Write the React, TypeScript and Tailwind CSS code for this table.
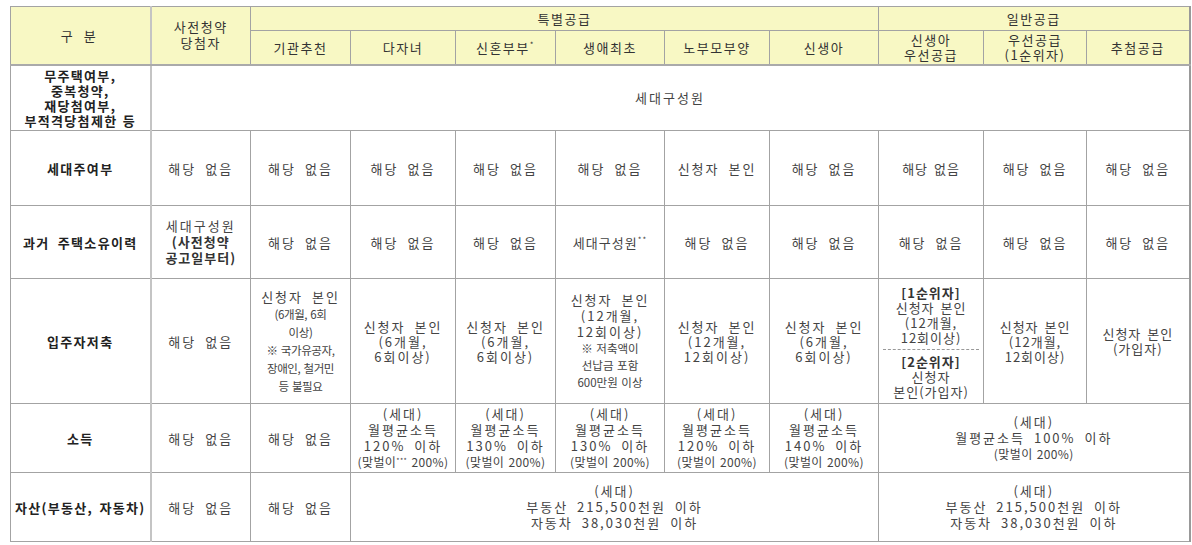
import React from 'react';

const cell = 'border border-[#a3a3a3] text-center align-middle px-1';
const head = `${cell} bg-[#f8f8c4] text-[#333] font-normal tracking-[1.5px] [word-spacing:0px]`;
const label = `${cell} font-bold text-[#222] tracking-[1.3px] border-r-2 border-r-[#c4c4c4]`;
const headBottom = 'border-b-2 border-b-[#aaa]';

const Small = ({ children }: { children: React.ReactNode }) => (
  <span className="text-[12px] tracking-[0.4px] [word-spacing:1px] whitespace-nowrap">{children}</span>
);

const None = () => <td className={cell}>해당 없음</td>;

const Income = ({ pct, star }: { pct: string; star?: boolean }) => (
  <td className={`${cell} leading-[16px] px-0`}>
    (세대)
    <br />
    월평균소득
    <br />
    {pct} 이하
    <br />
    <Small>
      (맞벌이{star && <sup className="text-[7px] -top-[4px]">***</sup>} 200%)
    </Small>
  </td>
);

export default function App() {
  return (
    <div className="bg-white w-[1192px] h-[545px] pt-[6px] pl-[10px]">
      <table
        className="table-fixed border-collapse w-[1179px] text-[13px] leading-[15px] text-[#444] tracking-[2px] [word-spacing:4px] border-t border-t-[#555] border-r-2 border-r-[#999]"
        style={{ fontFamily: '"Noto Sans CJK KR", "Noto Sans", sans-serif' }}
      >
        <colgroup>
          <col className="w-[140px]" />
          <col className="w-[100px]" />
          <col className="w-[100px]" />
          <col className="w-[105px]" />
          <col className="w-[100px]" />
          <col className="w-[109px]" />
          <col className="w-[105px]" />
          <col className="w-[109px]" />
          <col className="w-[105px]" />
          <col className="w-[103px]" />
          <col className="w-[103px]" />
        </colgroup>
        <thead>
          <tr className="h-[24px]">
            <th rowSpan={2} className={`${head} ${headBottom} border-r-2 border-r-[#c4c4c4] tracking-[4px]`}>
              구 분
            </th>
            <th rowSpan={2} className={`${head} ${headBottom} leading-[16px]`}>
              사전청약
              <br />
              당첨자
            </th>
            <th colSpan={6} className={head}>특별공급</th>
            <th colSpan={3} className={head}>일반공급</th>
          </tr>
          <tr className="h-[34px]">
            <th className={`${head} ${headBottom}`}>기관추천</th>
            <th className={`${head} ${headBottom}`}>다자녀</th>
            <th className={`${head} ${headBottom}`}>
              신혼부부<sup className="text-[8px] -top-[5px]">*</sup>
            </th>
            <th className={`${head} ${headBottom}`}>생애최초</th>
            <th className={`${head} ${headBottom}`}>노부모부양</th>
            <th className={`${head} ${headBottom}`}>신생아</th>
            <th className={`${head} ${headBottom}`}>
              신생아
              <br />
              우선공급
            </th>
            <th className={`${head} ${headBottom}`}>
              우선공급
              <br />
              (1순위자)
            </th>
            <th className={`${head} ${headBottom}`}>추첨공급</th>
          </tr>
        </thead>
        <tbody>
          <tr className="h-[66px]">
            <td className={`${label} tracking-[0.6px] [word-spacing:1px]`}>
              무주택여부,
              <br />
              중복청약,
              <br />
              재당첨여부,
              <br />
              부적격당첨제한 등
            </td>
            <td colSpan={10} className={cell}>세대구성원</td>
          </tr>
          <tr className="h-[75px]">
            <td className={label}>세대주여부</td>
            <None />
            <None />
            <None />
            <None />
            <None />
            <td className={cell}>신청자 본인</td>
            <None />
            <td className={`${cell} tracking-[1px] [word-spacing:2px]`}>해당 없음</td>
            <None />
            <None />
          </tr>
          <tr className="h-[73px]">
            <td className={label}>과거 주택소유이력</td>
            <td className={`${cell} leading-[16px]`}>
              세대구성원
              <br />
              <span className="font-bold text-[#333] tracking-[1px]">
                (사전청약
                <br />
                공고일부터)
              </span>
            </td>
            <None />
            <None />
            <None />
            <td className={`${cell} tracking-[1px]`}>
              세대구성원<sup className="text-[8px] -top-[5px]">**</sup>
            </td>
            <None />
            <None />
            <None />
            <None />
            <None />
          </tr>
          <tr className="h-[125px]">
            <td className={label}>입주자저축</td>
            <None />
            <td className={`${cell} leading-[17px]`}>
              신청자 본인
              <br />
              <span className="text-[11.5px] tracking-[-0.4px] [word-spacing:1px]">
                (6개월, 6회
                <br />
                이상)
                <br />※ 국가유공자,
                <br />
                장애인, 철거민
                <br />등 불필요
              </span>
            </td>
            <td className={cell}>
              신청자 본인
              <br />
              (6개월,
              <br />
              6회이상)
            </td>
            <td className={cell}>
              신청자 본인
              <br />
              (6개월,
              <br />
              6회이상)
            </td>
            <td className={`${cell} leading-[16px]`}>
              신청자 본인
              <br />
              (12개월,
              <br />
              12회이상)
              <br />
              <span className="text-[11.5px] tracking-[0px] [word-spacing:1px] leading-[17px]">
                ※ 저축액이
                <br />
                선납금 포함
                <br />
                600만원 이상
              </span>
            </td>
            <td className={cell}>
              신청자 본인
              <br />
              (12개월,
              <br />
              12회이상)
            </td>
            <td className={cell}>
              신청자 본인
              <br />
              (6개월,
              <br />
              6회이상)
            </td>
            <td className={`${cell} p-0 tracking-[1px] [word-spacing:2px]`}>
              <div className="h-[70px] flex flex-col justify-end pb-[4px]">
                <span className="font-bold text-[#333]">[1순위자]</span>
                <span>신청자 본인</span>
                <span>(12개월,</span>
                <span>12회이상)</span>
              </div>
              <div className="h-[54px] border-t border-dashed border-t-[#999] flex flex-col justify-start pt-[4px]">
                <span className="font-bold text-[#333]">[2순위자]</span>
                <span>신청자</span>
                <span>본인(가입자)</span>
              </div>
            </td>
            <td className={`${cell} tracking-[1px] [word-spacing:2px]`}>
              신청자 본인
              <br />
              (12개월,
              <br />
              12회이상)
            </td>
            <td className={`${cell} tracking-[1px] [word-spacing:2px]`}>
              신청자 본인
              <br />
              (가입자)
            </td>
          </tr>
          <tr className="h-[69px]">
            <td className={label}>소득</td>
            <None />
            <None />
            <Income pct="120%" star />
            <Income pct="130%" />
            <Income pct="130%" />
            <Income pct="120%" />
            <Income pct="140%" />
            <td colSpan={3} className={`${cell} leading-[16px]`}>
              (세대)
              <br />
              월평균소득 100% 이하
              <br />
              <Small>(맞벌이 200%)</Small>
            </td>
          </tr>
          <tr className="h-[69px]">
            <td className={`${label} tracking-[0.3px] [word-spacing:2px]`}>자산(부동산, 자동차)</td>
            <None />
            <None />
            <td colSpan={5} className={`${cell} leading-[16px]`}>
              (세대)
              <br />
              부동산 215,500천원 이하
              <br />
              자동차 38,030천원 이하
            </td>
            <td colSpan={3} className={`${cell} leading-[16px]`}>
              (세대)
              <br />
              부동산 215,500천원 이하
              <br />
              자동차 38,030천원 이하
            </td>
          </tr>
        </tbody>
      </table>
    </div>
  );
}
